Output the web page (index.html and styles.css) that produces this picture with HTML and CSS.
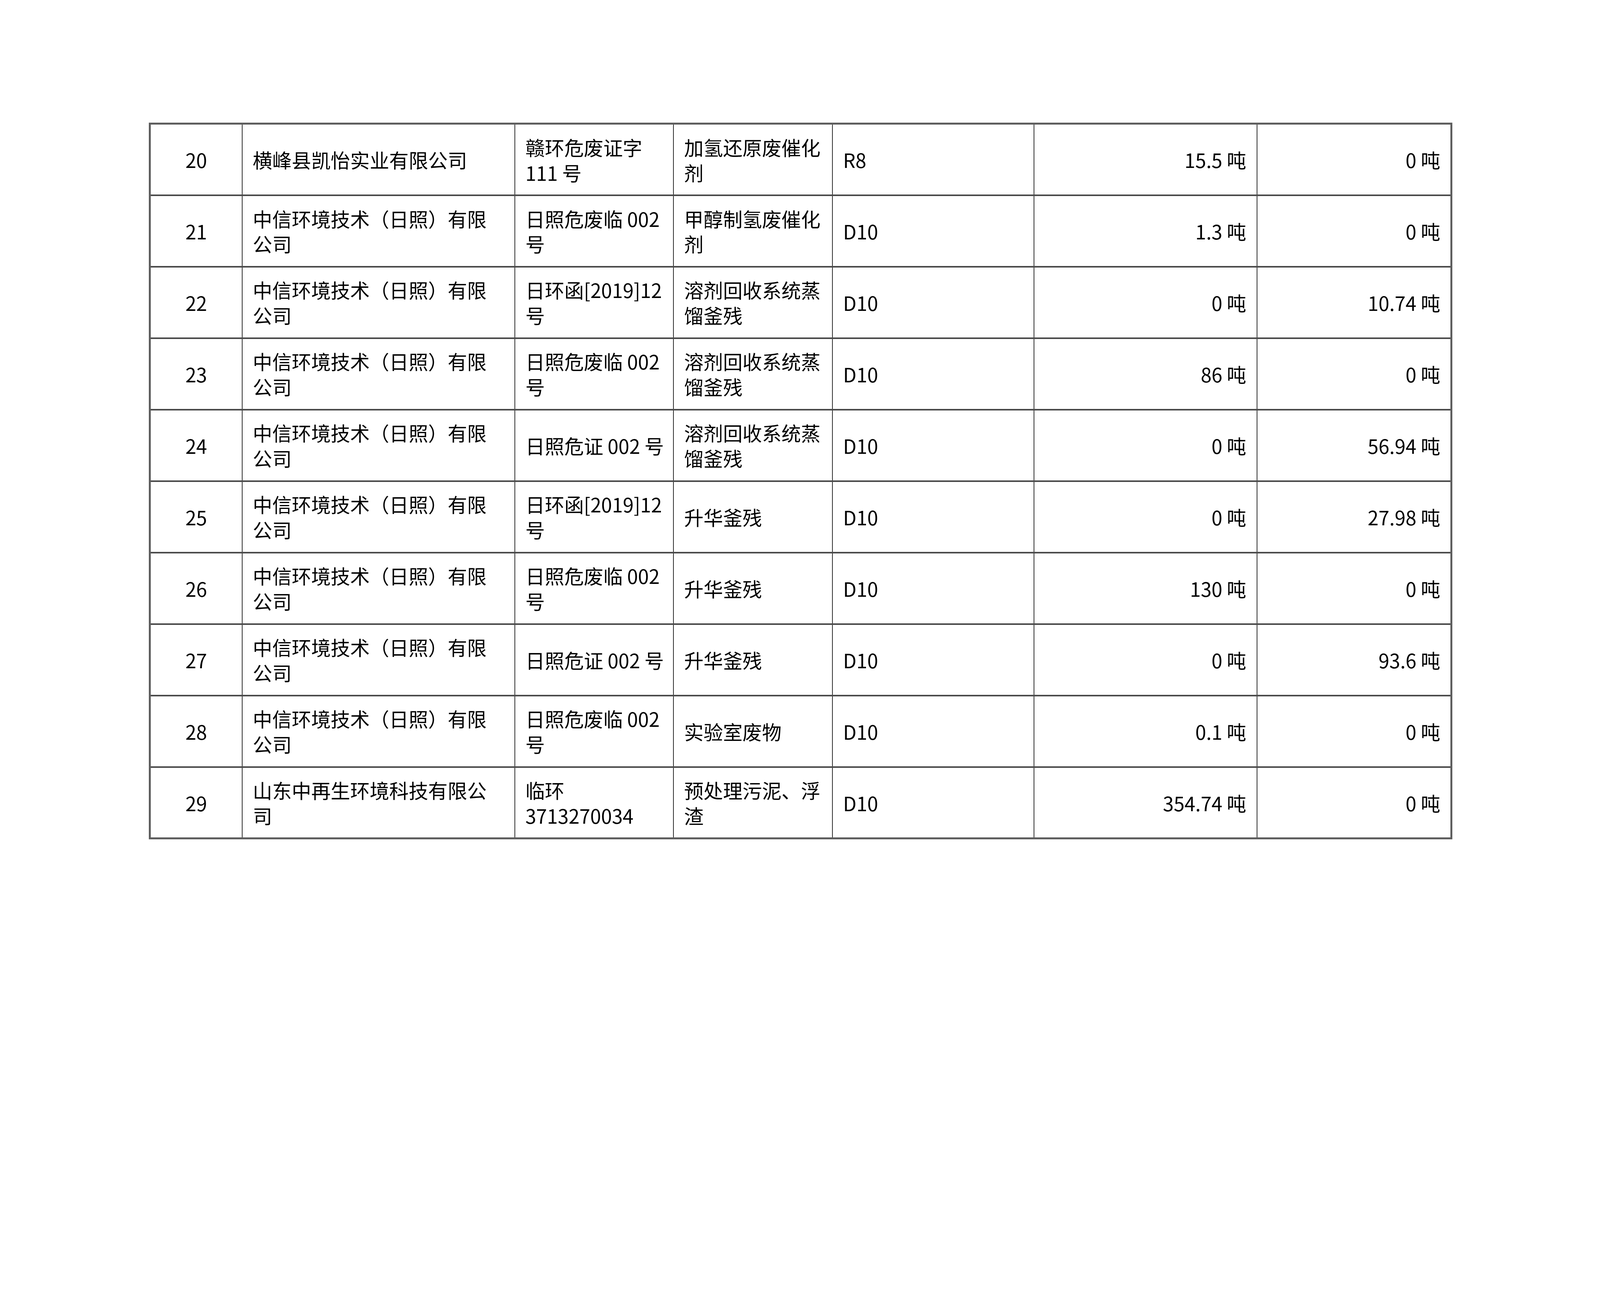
FILE: index.html
```html
<!DOCTYPE html>
<html lang="zh-CN">
<head>
<meta charset="utf-8">
<title>危废处置记录</title>
<link rel="stylesheet" href="styles.css">
</head>
<body>
<div class="page">
<table class="grid">
  <colgroup>
    <col class="c-no">
    <col class="c-name">
    <col class="c-permit">
    <col class="c-waste">
    <col class="c-code">
    <col class="c-qty">
    <col class="c-qty2">
  </colgroup>
  <tbody>
    <tr>
      <td class="no">20</td>
      <td class="txt">横峰县凯怡实业有限公司</td>
      <td class="txt">赣环危废证字<br>111 号</td>
      <td class="txt">加氢还原废催化<br>剂</td>
      <td class="txt">R8</td>
      <td class="num">15.5 吨</td>
      <td class="num">0 吨</td>
    </tr>
    <tr>
      <td class="no">21</td>
      <td class="txt">中信环境技术（日照）有限<br>公司</td>
      <td class="txt">日照危废临 002<br>号</td>
      <td class="txt">甲醇制氢废催化<br>剂</td>
      <td class="txt">D10</td>
      <td class="num">1.3 吨</td>
      <td class="num">0 吨</td>
    </tr>
    <tr>
      <td class="no">22</td>
      <td class="txt">中信环境技术（日照）有限<br>公司</td>
      <td class="txt">日环函[2019]12<br>号</td>
      <td class="txt">溶剂回收系统蒸<br>馏釜残</td>
      <td class="txt">D10</td>
      <td class="num">0 吨</td>
      <td class="num">10.74 吨</td>
    </tr>
    <tr>
      <td class="no">23</td>
      <td class="txt">中信环境技术（日照）有限<br>公司</td>
      <td class="txt">日照危废临 002<br>号</td>
      <td class="txt">溶剂回收系统蒸<br>馏釜残</td>
      <td class="txt">D10</td>
      <td class="num">86 吨</td>
      <td class="num">0 吨</td>
    </tr>
    <tr>
      <td class="no">24</td>
      <td class="txt">中信环境技术（日照）有限<br>公司</td>
      <td class="txt">日照危证 002 号</td>
      <td class="txt">溶剂回收系统蒸<br>馏釜残</td>
      <td class="txt">D10</td>
      <td class="num">0 吨</td>
      <td class="num">56.94 吨</td>
    </tr>
    <tr>
      <td class="no">25</td>
      <td class="txt">中信环境技术（日照）有限<br>公司</td>
      <td class="txt">日环函[2019]12<br>号</td>
      <td class="txt">升华釜残</td>
      <td class="txt">D10</td>
      <td class="num">0 吨</td>
      <td class="num">27.98 吨</td>
    </tr>
    <tr>
      <td class="no">26</td>
      <td class="txt">中信环境技术（日照）有限<br>公司</td>
      <td class="txt">日照危废临 002<br>号</td>
      <td class="txt">升华釜残</td>
      <td class="txt">D10</td>
      <td class="num">130 吨</td>
      <td class="num">0 吨</td>
    </tr>
    <tr>
      <td class="no">27</td>
      <td class="txt">中信环境技术（日照）有限<br>公司</td>
      <td class="txt">日照危证 002 号</td>
      <td class="txt">升华釜残</td>
      <td class="txt">D10</td>
      <td class="num">0 吨</td>
      <td class="num">93.6 吨</td>
    </tr>
    <tr>
      <td class="no">28</td>
      <td class="txt">中信环境技术（日照）有限<br>公司</td>
      <td class="txt">日照危废临 002<br>号</td>
      <td class="txt">实验室废物</td>
      <td class="txt">D10</td>
      <td class="num">0.1 吨</td>
      <td class="num">0 吨</td>
    </tr>
    <tr>
      <td class="no">29</td>
      <td class="txt">山东中再生环境科技有限公<br>司</td>
      <td class="txt">临环<br>3713270034</td>
      <td class="txt">预处理污泥、浮<br>渣</td>
      <td class="txt">D10</td>
      <td class="num">354.74 吨</td>
      <td class="num">0 吨</td>
    </tr>
  </tbody>
</table>
</div>
</body>
</html>
```

FILE: styles.css
```css
:root {
  /* one unit of the 4678px-wide reference sheet */
  --u: calc(100vw / 4678);
}

html, body {
  margin: 0;
  padding: 0;
  background: #ffffff;
  overflow: hidden;
}

.page {
  width: 100vw;
  box-sizing: border-box;
  padding: calc(359 * var(--u)) 0 0 calc(435 * var(--u));
  font-family: "Noto Sans CJK SC", "Noto Sans", sans-serif;
  font-size: calc(57 * var(--u));
  line-height: calc(74 * var(--u));
  color: #000000;
}

.grid {
  border-collapse: collapse;
  table-layout: fixed;
  width: calc(3806 * var(--u));
  border: calc(6 * var(--u)) solid #5e5e5e;
}

.c-no { width: calc(270 * var(--u)); }
.c-name { width: calc(797 * var(--u)); }
.c-permit { width: calc(464 * var(--u)); }
.c-waste { width: calc(465 * var(--u)); }
.c-code { width: calc(589 * var(--u)); }
.c-qty { width: calc(652 * var(--u)); }
.c-qty2 { width: calc(569 * var(--u)); }

.grid td {
  height: calc(209 * var(--u));
  padding: 0 calc(30 * var(--u));
  vertical-align: middle;
  white-space: nowrap;
  border-left: calc(3 * var(--u)) solid #2e2e2e;
  border-right: calc(3 * var(--u)) solid #2e2e2e;
  border-top: calc(5 * var(--u)) solid #4a4a4a;
  border-bottom: calc(5 * var(--u)) solid #4a4a4a;
  box-sizing: border-box;
}

.grid tr:first-child td { border-top: calc(6 * var(--u)) solid #5e5e5e; }
.grid tr:last-child td { border-bottom: calc(6 * var(--u)) solid #5e5e5e; }
.grid td:first-child { border-left: calc(6 * var(--u)) solid #5e5e5e; }
.grid td:last-child { border-right: calc(5 * var(--u)) solid #3c3c3c; }

.no { text-align: center; }
.txt { text-align: left; }
.num { text-align: right; }
```
